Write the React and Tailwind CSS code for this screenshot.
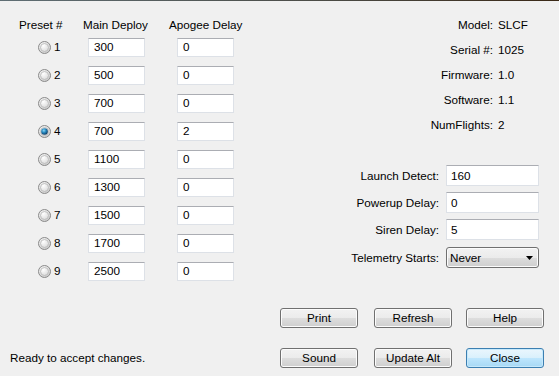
import React from "react";

const font = { fontFamily: '"Liberation Sans", Arial, sans-serif' };

function Radio({ checked }) {
  return (
    <svg width="13" height="13" viewBox="0 0 13 13" className="shrink-0">
      <defs>
        <radialGradient id="rg" cx="40%" cy="35%" r="70%">
          <stop offset="0%" stopColor="#ffffff" />
          <stop offset="60%" stopColor="#e2e2e2" />
          <stop offset="100%" stopColor="#c8c8c8" />
        </radialGradient>
        <radialGradient id="rb" cx="40%" cy="35%" r="65%">
          <stop offset="0%" stopColor="#8fd6f5" />
          <stop offset="45%" stopColor="#2a8ec4" />
          <stop offset="100%" stopColor="#0c3c66" />
        </radialGradient>
      </defs>
      <circle cx="6.5" cy="6.5" r="6" fill="url(#rg)" stroke="#8a8a8a" strokeWidth="1" />
      <circle cx="6.5" cy="6.5" r="4" fill="none" stroke="#b5b5b5" strokeWidth="0.8" />
      {checked && <circle cx="6.5" cy="6.5" r="3.3" fill="url(#rb)" />}
    </svg>
  );
}

function TextBox({ value, className }) {
  return (
    <div
      className={
        "bg-white border border-[#dde1e7] border-t-[#abadb3] flex items-center text-[11.7px] text-black " +
        className
      }
    >
      {value}
    </div>
  );
}

function Button({ children, primary }) {
  return (
    <div
      className={
        primary
          ? "w-[78px] h-[20px] rounded-[3px] border border-[#3c7fb1] bg-[linear-gradient(to_bottom,#eaf6fd_0%,#d9f0fc_50%,#bee6fd_51%,#a7d9f5_100%)] shadow-[inset_0_0_0_1px_#c6e9fc] flex items-center justify-center text-[11.7px] text-black"
          : "w-[78px] h-[20px] rounded-[3px] border border-[#707070] bg-[linear-gradient(to_bottom,#f2f2f2_0%,#ebebeb_50%,#dddddd_51%,#cfcfcf_100%)] shadow-[inset_0_0_0_1px_#fcfcfc] flex items-center justify-center text-[11.7px] text-black"
      }
    >
      {children}
    </div>
  );
}

const presets = [
  [1, "300", "0"],
  [2, "500", "0"],
  [3, "700", "0"],
  [4, "700", "2"],
  [5, "1100", "0"],
  [6, "1300", "0"],
  [7, "1500", "0"],
  [8, "1700", "0"],
  [9, "2500", "0"],
];

const info = [
  ["Model:", "SLCF"],
  ["Serial #:", "1025"],
  ["Firmware:", "1.0"],
  ["Software:", "1.1"],
  ["NumFlights:", "2"],
];

export default function App() {
  return (
    <div className="w-[559px] h-[376px] bg-[#f0f0f0] flex flex-col overflow-hidden text-black" style={font}>
      <div className="h-[1px] bg-[linear-gradient(to_right,#5f6e74,#4a4a44_60%,#3a2816)]" />
      <div className="flex h-[299px]">
        {/* Left presets */}
        <div className="w-[300px] pt-[17px] flex flex-col">
          <div className="flex pl-[19px] h-[14px] leading-[14px] text-[11.7px]">
            <div className="w-[64px]">Preset #</div>
            <div className="w-[86px]">Main Deploy</div>
            <div>Apogee Delay</div>
          </div>
          <div className="mt-[1px] flex flex-col">
            {presets.map(([n, main, apo]) => (
              <div key={n} className="h-[28px] flex items-center pl-[38px]">
                <div className="w-[50px] flex items-center">
                  <Radio checked={n === 4} />
                  <span className="ml-[3px] text-[11.7px] leading-[14px]">{n}</span>
                </div>
                <TextBox value={main} className="w-[57px] h-[19px] pl-[5px]" />
                <TextBox value={apo} className="w-[57px] h-[19px] pl-[5px] ml-[32px]" />
              </div>
            ))}
          </div>
        </div>
        {/* Right side */}
        <div className="flex-1 pt-[11px] flex flex-col">
          <div className="flex flex-col">
            {info.map(([l, v]) => (
              <div key={l} className="h-[25px] flex items-center text-[11.7px]">
                <span className="w-[193px] text-right">{l}</span>
                <span className="ml-[5px]">{v}</span>
              </div>
            ))}
          </div>
          <div className="mt-[28px] flex flex-col gap-[6px]">
            {[
              ["Launch Detect:", "160"],
              ["Powerup Delay:", "0"],
              ["Siren Delay:", "5"],
            ].map(([l, v]) => (
              <div key={l} className="h-[21px] flex items-center text-[11.7px]">
                <span className="w-[139px] text-right">{l}</span>
                <TextBox value={v} className="ml-[7px] w-[93px] h-[21px] pl-[4px]" />
              </div>
            ))}
            <div className="h-[21px] mt-[1px] flex items-center text-[11.7px]">
              <span className="w-[139px] text-right">Telemetry Starts:</span>
              <div className="ml-[7px] w-[93px] h-[21px] rounded-[3px] border border-[#707070] bg-[linear-gradient(to_bottom,#f2f2f2_0%,#ebebeb_50%,#dddddd_51%,#cfcfcf_100%)] shadow-[inset_0_0_0_1px_#fcfcfc] flex items-center pl-[3px] pr-[5px]">
                <span className="flex-1">Never</span>
                <svg width="7" height="4" viewBox="0 0 7 4">
                  <path d="M0 0 H7 L3.5 4 Z" fill="#000" />
                </svg>
              </div>
            </div>
          </div>
        </div>
      </div>
      {/* Bottom */}
      <div className="flex flex-1">
        <div className="w-[280px] pl-[10px] pt-[51px] text-[11.7px] leading-[14px]">Ready to accept changes.</div>
        <div className="pt-[8px] grid grid-cols-[94px_92px_78px] gap-y-[12px]">
          <Button>Print</Button>
          <Button>Refresh</Button>
          <Button>Help</Button>
          <Button>Sound</Button>
          <Button>Update Alt</Button>
          <Button primary>Close</Button>
        </div>
      </div>
    </div>
  );
}
